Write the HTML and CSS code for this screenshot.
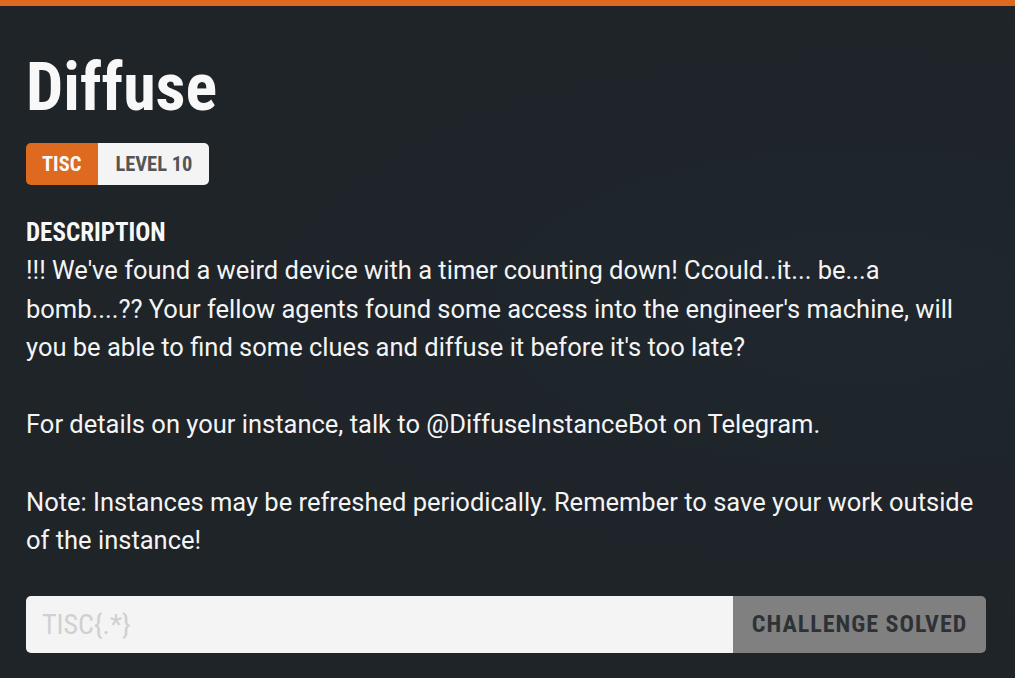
FILE: index.html
```html
<!DOCTYPE html>
<html>
<head>
<meta charset="utf-8">
<link rel="stylesheet" href="styles.css">
</head>
<body>
<div class="page">
  <h1 class="title">Diffuse</h1>
  <div class="tags">
    <span class="tag tag-cat">TISC</span>
    <span class="tag tag-level">LEVEL 10</span>
  </div>
  <div class="desc-label">DESCRIPTION</div>
  <div class="desc">
    <p>!!! We've found a weird device with a timer counting down! Ccould..it... be...a bomb....?? Your fellow agents found some access into the engineer's machine, will you be able to find some clues and diffuse it before it's too late?</p>
    <p>For details on your instance, talk to @DiffuseInstanceBot on Telegram.</p>
    <p>Note: Instances may be refreshed periodically. Remember to save your work outside of the instance!</p>
  </div>
  <form class="flag-form">
    <input class="flag-input" type="text" placeholder="TISC{.*}">
    <button class="flag-btn" type="button">CHALLENGE SOLVED</button>
  </form>
</div>
</body>
</html>
```
FILE: styles.css
```css
html, body {
  margin: 0;
  padding: 0;
}
body {
  background: radial-gradient(ellipse at 85% 45%, #1f262d 0%, #1e2428 60%);
  background-color: #1e2428;
  color: #f4f4f4;
  font-family: Roboto, "Liberation Sans", sans-serif;
  width: 1015px;
  height: 678px;
  overflow: hidden;
  border-top: 6px solid #dd6a1f;
}
.page {
  padding: 0 29px 0 26px;
}
.title {
  margin: 0;
  padding-top: 42px;
  font-family: Roboto, "Liberation Sans", sans-serif;
  font-stretch: 75%;
  font-weight: 700;
  font-size: 66px;
  line-height: 80px;
  color: #f8f8f8;
}
.tags {
  display: inline-flex;
  margin-top: 15px;
  border-radius: 5px;
  overflow: hidden;
}
.tag {
  font-family: Roboto, "Liberation Sans", sans-serif;
  font-stretch: 75%;
  font-weight: 700;
  font-size: 20.5px;
  line-height: 42px;
  height: 42px;
}
.tag-cat {
  background: #dd6a1f;
  color: #fafafa;
  padding: 0 17px 0 16px;
}
.tag-level {
  background: #f4f4f4;
  color: #555;
  padding: 0 17px 0 17px;
}
.desc-label {
  margin-top: 35px;
  font-family: Roboto, "Liberation Sans", sans-serif;
  font-stretch: 75%;
  font-weight: 700;
  font-size: 25px;
  line-height: 26px;
  color: #f8f8f8;
}
.desc {
  margin-top: 5px;
  max-width: 960px;
  font-size: 25.5px;
  line-height: 38.6px;
  color: #f4f4f4;
}
.desc p {
  margin: 0 0 38.6px 0;
}
.desc p:last-child {
  margin-bottom: 0;
}
.flag-form {
  display: flex;
  margin-top: 36px;
  height: 57px;
  border-radius: 5px;
  overflow: hidden;
}
.flag-input {
  flex: 1;
  border: none;
  outline: none;
  background: #f4f4f4;
  font-family: Roboto, "Liberation Sans", sans-serif;
  font-stretch: 75%;
  font-size: 28px;
  padding: 0 16px;
  color: #333;
}
.flag-input::placeholder {
  color: #d0d0d0;
}
.flag-btn {
  width: 253px;
  border: none;
  background: #808080;
  color: #2e3236;
  font-family: Roboto, "Liberation Sans", sans-serif;
  font-stretch: 75%;
  font-weight: 700;
  font-size: 24px;
  letter-spacing: 1px;
  padding: 0;
}
```
